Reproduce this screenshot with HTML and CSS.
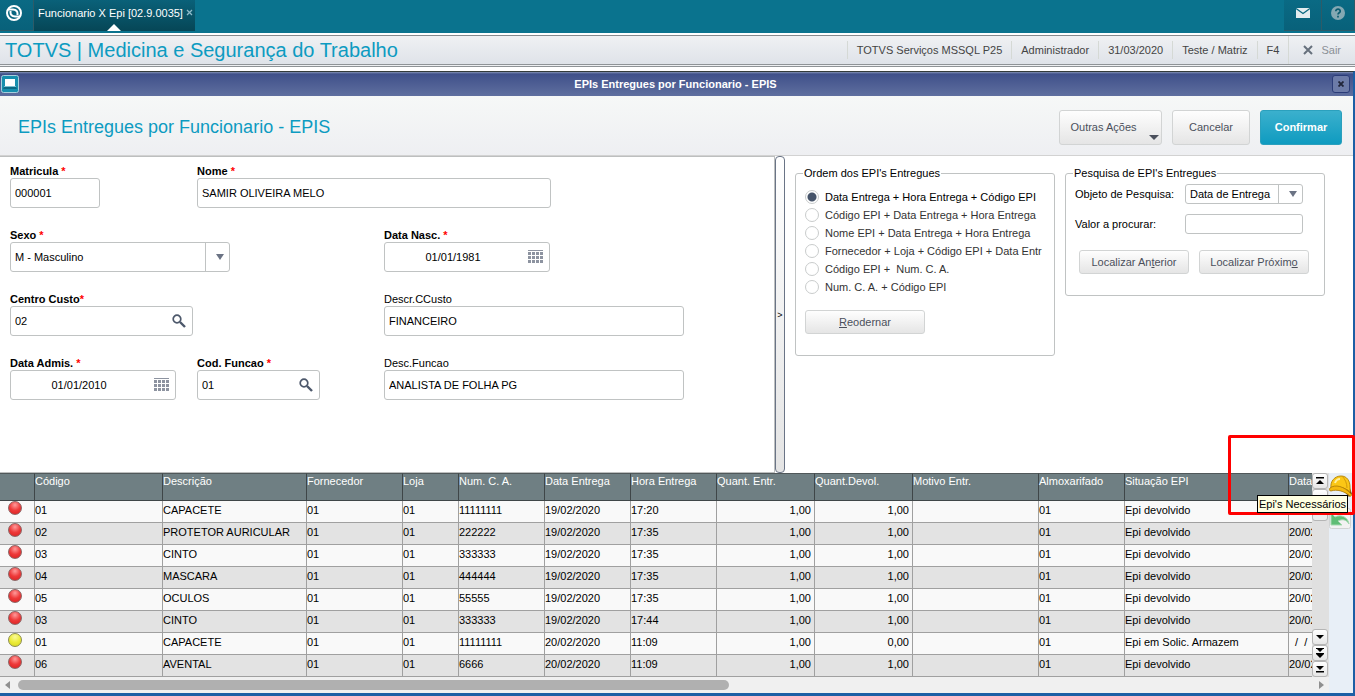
FILE: index.html
```html
<!DOCTYPE html>
<html lang="pt-BR">
<head>
  <meta charset="UTF-8">
  <meta name="viewport" content="width=device-width, initial-scale=1.0">
  <title>TOTVS | Medicina e Segurança do Trabalho</title>
  <link rel="stylesheet" href="styles.css">
</head>
<body>
  <!-- Top bar -->
  <header class="topbar">
    <button class="top-btn logo" aria-label="Menu">
      <svg width="18" height="18" viewBox="0 0 18 18"><circle cx="9" cy="9" r="7" fill="none" stroke="#fff" stroke-width="2"/><path d="M3 5.500L8 5.500Q12.500 6 12.500 9.500V11" fill="none" stroke="#fff" stroke-width="2"/><path d="M15 12.500L10 12.500Q5.500 12 5.500 8.500V7" fill="none" stroke="#fff" stroke-width="2"/></svg>
    </button>
    <div class="tab">
      <span>Funcionario X Epi [02.9.0035]</span>
      <button class="tab-close" aria-label="Fechar aba"><svg width="7" height="7" viewBox="0 0 7 7"><path d="M1 1l5 5M6 1L1 6" stroke="#8fbccb" stroke-width="1.300"/></svg></button>
    </div>
    <div class="top-right">
      <button class="top-btn mail" aria-label="Mensagens">
        <svg width="14" height="10" viewBox="0 0 14 10"><rect width="14" height="10" fill="#e3ecef"/><path d="M0 0.500l7 5 7-5" fill="none" stroke="#0a6880" stroke-width="1.300"/></svg>
      </button>
      <button class="top-btn help" aria-label="Ajuda">
        <svg width="14" height="14" viewBox="0 0 14 14"><circle cx="7" cy="7" r="7" fill="#84a8b3"/><path d="M4.800 5.300C4.800 2.300 9.300 2.500 9.200 5.200C9.200 6.800 7 6.700 7 8.600M7 9.700v1.700" fill="none" stroke="#0a5b70" stroke-width="1.700"/></svg>
      </button>
    </div>
  </header>

  <!-- Status bar -->
  <div class="statusbar">
    <h1>TOTVS | Medicina e Segurança do Trabalho</h1>
    <ul>
      <li>TOTVS Serviços MSSQL P25</li>
      <li>Administrador</li>
      <li>31/03/2020</li>
      <li>Teste / Matriz</li>
      <li>F4</li>
    </ul>
    <button class="exit">
      <svg width="10" height="10" viewBox="0 0 10 10"><path d="M1 1l8 8M9 1L1 9" stroke="#66707c" stroke-width="2"/></svg>
      Sair
    </button>
  </div>

  <!-- Window -->
  <main class="window">
    <div class="titlebar">
      <svg class="win-icon" width="18" height="18" viewBox="0 0 18 18"><rect x="0.500" y="0.500" width="17" height="17" rx="2" fill="#178fae" stroke="#a9cfdd"/><rect x="4" y="4" width="10" height="7" fill="#fff"/><path d="M3 12h12l1 2H2z" fill="#0b6984"/><path d="M3 11.500h12" stroke="#7cc0d2"/></svg>
      <h2>EPIs Entregues por Funcionario - EPIS</h2>
      <button class="win-close" aria-label="Fechar"><svg width="6" height="6" viewBox="0 0 6 6"><path d="M0.500 0.500l5 5M5.500 0.500l-5 5" stroke="#20253a" stroke-width="1.800"/></svg></button>
    </div>

    <div class="heading">
      <h3>EPIs Entregues por Funcionario - EPIS</h3>
      <div class="actions">
        <button class="btn more">Outras Ações</button>
        <button class="btn cancel">Cancelar</button>
        <button class="btn primary">Confirmar</button>
      </div>
    </div>

    <section class="content">
      <form class="employee">
        <div class="field">
          <label for="matricula"><b>Matricula</b> <i>*</i></label>
          <input class="w-code" id="matricula" type="text" value="000001">
        </div>
        <div class="field wide">
          <label for="nome"><b>Nome</b> <i>*</i></label>
          <input class="w-name" id="nome" type="text" value="SAMIR OLIVEIRA MELO">
        </div>

        <div class="field wide">
          <label for="sexo"><b>Sexo</b> <i>*</i></label>
          <div class="select w-select">
            <select id="sexo"><option>M - Masculino</option></select>
          </div>
        </div>
        <div class="field">
          <label for="nasc"><b>Data Nasc.</b> <i>*</i></label>
          <div class="with-icon w-date">
            <input class="date" id="nasc" type="text" value="01/01/1981">
            <svg width="15" height="13" viewBox="0 0 15 13"><path d="M0 0.500h15M0 3.500h15M0 7.500h15M0 11.500h15" stroke="#8d93a0"/><path d="M0 3.500h15M0 7.500h15M0 11.500h15" stroke="#fff"/><path d="M0 3.500h15M0 7.500h15M0 11.500h15" stroke="#8d93a0" stroke-width="3" stroke-dasharray="3 1"/></svg>
          </div>
        </div>

        <div class="field wide">
          <label for="custo"><b>Centro Custo</b><i>*</i></label>
          <div class="with-icon w-lookup">
            <input id="custo" type="text" value="02">
            <svg width="14" height="14" viewBox="0 0 14 14"><circle cx="5" cy="5" r="3.800" fill="none" stroke="#4d586b" stroke-width="1.700"/><path d="M8 8l5 5" stroke="#4d586b" stroke-width="2.400"/></svg>
          </div>
        </div>
        <div class="field">
          <label for="desccusto">Descr.CCusto</label>
          <input class="w-desc" id="desccusto" type="text" value="FINANCEIRO">
        </div>

        <div class="field">
          <label for="admis"><b>Data Admis.</b> <i>*</i></label>
          <div class="with-icon w-date">
            <input class="date" id="admis" type="text" value="01/01/2010">
            <svg width="15" height="13" viewBox="0 0 15 13"><path d="M0 0.500h15" stroke="#8d93a0"/><path d="M0 3.500h15M0 7.500h15M0 11.500h15" stroke="#8d93a0" stroke-width="3" stroke-dasharray="3 1"/></svg>
          </div>
        </div>
        <div class="field">
          <label for="funcao"><b>Cod. Funcao</b> <i>*</i></label>
          <div class="with-icon w-func">
            <input id="funcao" type="text" value="01">
            <svg width="14" height="14" viewBox="0 0 14 14"><circle cx="5" cy="5" r="3.800" fill="none" stroke="#4d586b" stroke-width="1.700"/><path d="M8 8l5 5" stroke="#4d586b" stroke-width="2.400"/></svg>
          </div>
        </div>
        <div class="field">
          <label for="descfuncao">Desc.Funcao</label>
          <input class="w-desc" id="descfuncao" type="text" value="ANALISTA DE FOLHA PG">
        </div>
      </form>

      <button class="splitter" aria-label="Recolher painel">&gt;</button>

      <div class="side">
        <fieldset>
          <legend>Ordem dos EPI's Entregues</legend>
          <div class="radios">
            <label><input type="radio" name="ordem" checked><span>Data Entrega + Hora Entrega + Código EPI</span></label>
            <label><input type="radio" name="ordem"><span>Código EPI + Data Entrega + Hora Entrega</span></label>
            <label><input type="radio" name="ordem"><span>Nome EPI + Data Entrega + Hora Entrega</span></label>
            <label><input type="radio" name="ordem"><span>Fornecedor + Loja + Código EPI + Data Entr</span></label>
            <label><input type="radio" name="ordem"><span>Código EPI +&nbsp; Num. C. A.</span></label>
            <label><input type="radio" name="ordem"><span>Num. C. A. + Código EPI</span></label>
          </div>
          <button class="btn small reorder"><u>R</u>eodernar</button>
        </fieldset>

        <fieldset class="search">
          <legend>Pesquisa de EPI's Entregues</legend>
          <div class="line">
            <label for="objeto">Objeto de Pesquisa:</label>
            <div class="select short">
              <select id="objeto"><option>Data de Entrega</option></select>
            </div>
          </div>
          <div class="line">
            <label for="valor">Valor a procurar:</label>
            <input class="short" id="valor" type="text">
          </div>
          <div class="find">
            <button class="btn small">Localizar An<u>t</u>erior</button>
            <button class="btn small">Localizar Próxim<u>o</u></button>
          </div>
        </fieldset>
      </div>
    </section>

    <!-- Grid -->
    <section class="grid">
      <div class="grid-main">
        <div class="grid-rows">
          <div class="table-wrap">
            <table>
              <colgroup>
                <col class="c-flag"><col class="c-cod"><col class="c-desc"><col class="c-forn"><col class="c-loja">
                <col class="c-mid"><col class="c-mid"><col class="c-mid"><col class="c-qty"><col class="c-qty">
                <col class="c-mot"><col class="c-mid"><col class="c-sit"><col class="c-last">
              </colgroup>
              <thead>
                <tr><th></th><th>Código</th><th>Descrição</th><th>Fornecedor</th><th>Loja</th><th>Num. C. A.</th><th>Data Entrega</th><th>Hora Entrega</th><th>Quant. Entr.</th><th>Quant.Devol.</th><th>Motivo Entr.</th><th>Almoxarifado</th><th>Situação EPI</th><th>Data</th></tr>
              </thead>
              <tbody>
                <tr><td><span class="ball"></span></td><td>01</td><td>CAPACETE</td><td>01</td><td>01</td><td>11111111</td><td>19/02/2020</td><td>17:20</td><td class="num">1,00</td><td class="num">1,00</td><td></td><td>01</td><td>Epi devolvido</td><td></td></tr>
                <tr><td><span class="ball"></span></td><td>02</td><td>PROTETOR AURICULAR</td><td>01</td><td>01</td><td>222222</td><td>19/02/2020</td><td>17:35</td><td class="num">1,00</td><td class="num">1,00</td><td></td><td>01</td><td>Epi devolvido</td><td>20/02/2020</td></tr>
                <tr><td><span class="ball"></span></td><td>03</td><td>CINTO</td><td>01</td><td>01</td><td>333333</td><td>19/02/2020</td><td>17:35</td><td class="num">1,00</td><td class="num">1,00</td><td></td><td>01</td><td>Epi devolvido</td><td>20/02/2020</td></tr>
                <tr><td><span class="ball"></span></td><td>04</td><td>MASCARA</td><td>01</td><td>01</td><td>444444</td><td>19/02/2020</td><td>17:35</td><td class="num">1,00</td><td class="num">1,00</td><td></td><td>01</td><td>Epi devolvido</td><td>20/02/2020</td></tr>
                <tr><td><span class="ball"></span></td><td>05</td><td>OCULOS</td><td>01</td><td>01</td><td>55555</td><td>19/02/2020</td><td>17:35</td><td class="num">1,00</td><td class="num">1,00</td><td></td><td>01</td><td>Epi devolvido</td><td>20/02/2020</td></tr>
                <tr><td><span class="ball"></span></td><td>03</td><td>CINTO</td><td>01</td><td>01</td><td>333333</td><td>19/02/2020</td><td>17:44</td><td class="num">1,00</td><td class="num">1,00</td><td></td><td>01</td><td>Epi devolvido</td><td>20/02/2020</td></tr>
                <tr><td><span class="ball yellow"></span></td><td>01</td><td>CAPACETE</td><td>01</td><td>01</td><td>11111111</td><td>20/02/2020</td><td>11:09</td><td class="num">1,00</td><td class="num">0,00</td><td></td><td>01</td><td>Epi em Solic. Armazem</td><td>&nbsp; /&nbsp; /</td></tr>
                <tr><td><span class="ball"></span></td><td>06</td><td>AVENTAL</td><td>01</td><td>01</td><td>6666</td><td>20/02/2020</td><td>11:09</td><td class="num">1,00</td><td class="num">1,00</td><td></td><td>01</td><td>Epi devolvido</td><td>20/02/2020</td></tr>
              </tbody>
            </table>
          </div>
          <div class="vscroll">
            <button aria-label="Primeiro"><svg width="8" height="8" viewBox="0 0 8 8"><path d="M0 0h8v1.500H0zM4 3l4 4H0z"/></svg></button>
            <button aria-label="Linha acima"><svg width="8" height="8" viewBox="0 0 8 8"><path d="M4 2l4 4H0z"/></svg></button>
            <div class="thumb"></div>
            <button aria-label="Linha abaixo"><svg width="8" height="8" viewBox="0 0 8 8"><path d="M4 6L0 2h8z"/></svg></button>
            <button aria-label="Página abaixo"><svg width="8" height="10" viewBox="0 0 8 10"><path d="M4 4L1 1H0V0h8v1H7zM4 10L0 6V5h8v1z"/></svg></button>
            <button aria-label="Último"><svg width="8" height="8" viewBox="0 0 8 8"><path d="M4 5L0 1h8zM0 6h8v1.500H0z"/></svg></button>
          </div>
        </div>
        <div class="hscroll">
          <span class="arrow left"></span>
          <div class="track"><div class="bar"></div></div>
          <span class="arrow right"></span>
        </div>
      </div>

      <div class="tools">
        <button aria-label="Epi's Necessários">
          <svg width="24" height="23" viewBox="0 0 24 23"><path d="M14 15l6 7 3-3-2-6z" fill="#77500a"/><path d="M2 13C1 6 6 1 12 1c6 0 9 5 9 11v5c-5-5-13-6-19-4z" fill="#fbc716" stroke="#b98a0a"/><path d="M1 13c5-4 14-2 21 6 1 1 0 3-1 2-6-5-13-7-19-5-2 0-2-2-1-3z" fill="#f4b90f" stroke="#a87808" stroke-width="0.800"/><path d="M6 8c1-3 3-4 5-4" fill="none" stroke="#fff0a0" stroke-width="2"/><path d="M13 1c3 3 5 7 5 12" fill="none" stroke="#d49a0a"/></svg>
        </button>
        <button aria-label="Voltar">
          <svg width="22" height="21" viewBox="0 0 22 21"><rect x="0.500" y="0.500" width="21" height="20" rx="2" fill="#f2f2f2" stroke="#d0d3d3"/><path d="M2 5v12h11l-4-4c4-2 8-2 11 3-1-7-8-10-14-7z" fill="#5fbd75" stroke="#a5d9b0"/></svg>
        </button>
        <span class="tooltip">Epi's Necessários</span>
      </div>
      <div class="highlight"></div>
    </section>
  </main>
</body>
</html>
```
FILE: styles.css
```css
/* Global Styles */
* {
  margin: 0;
  padding: 0;
  box-sizing: border-box;
}

body {
  display: flex;
  flex-direction: column;
  min-height: 100vh;
  background-color: #fff;
  color: #000;
  font-family: "Liberation Sans", Arial, sans-serif;
  font-size: 11px;
  line-height: 14px;
}

button,
input,
select {
  font: inherit;
  color: inherit;
}

button {
  border: none;
  background: none;
  cursor: pointer;
}

svg {
  display: block;
}

/* Top bar */
.topbar {
  display: flex;
  height: 33px;
  background-color: #0a738e;
}

.top-btn {
  display: flex;
  justify-content: center;
  height: 31px;
  background: linear-gradient(#0a6a84, #08617a);
  border-right: 1px solid #2d5b68;
  border-bottom: 1px solid #2d5b68;
}

.logo {
  width: 34px;
  padding: 4px 6px 0 0;
}

.tab {
  position: relative;
  display: flex;
  align-items: flex-start;
  gap: 3px;
  height: 31px;
  padding: 6px 2px 0 4px;
  background: linear-gradient(#0a6179, #064656);
  color: #fff;
}

.tab::after {
  content: "";
  position: absolute;
  bottom: 0;
  left: 50%;
  margin-left: -7px;
  border: 7px solid transparent;
  border-top: none;
  border-bottom-color: #fff;
}

.tab-close {
  padding-top: 3px;
}

.top-right {
  display: flex;
  margin-left: auto;
}

.mail {
  width: 38px;
  padding-top: 8px;
}

.help {
  width: 33px;
  padding-top: 6px;
}

/* Status bar */
.statusbar {
  display: flex;
  align-items: center;
  height: 32px;
  margin: 2px 0 4px;
  padding-left: 5px;
  background: linear-gradient(#eff1f3, #dfe3e9);
  border-top: 1px solid #85898d;
  border-bottom: 3px double #8f9397;
}

.statusbar h1 {
  flex: 1;
  color: #0d9bc1;
  font-size: 20px;
  line-height: 24px;
  font-weight: normal;
}

.statusbar ul {
  display: flex;
  list-style: none;
  color: #444;
}

.statusbar li {
  padding: 2px 9px;
  border-left: 1px solid #d5d9d5;
}

.exit {
  display: flex;
  align-items: center;
  gap: 8px;
  align-self: stretch;
  padding: 0 14px;
  border-left: 1px solid #d5d9d5;
  color: #8b9096;
}

/* Window */
.window {
  display: flex;
  flex: 1;
  flex-direction: column;
  border-top: 1px solid #333b3b;
  border-right: 2px solid #1c5fa5;
  border-bottom: 3px solid #1c5fa5;
}

.titlebar {
  display: flex;
  align-items: center;
  height: 24px;
  padding: 0 3px 0 1px;
  background: linear-gradient(#8492b5 0, #3f508a 2px, #5f6f9f);
}

.titlebar h2 {
  flex: 1;
  color: #fff;
  font-size: 11px;
  line-height: 14px;
  text-align: center;
}

.win-close {
  display: flex;
  align-items: center;
  justify-content: center;
  width: 18px;
  height: 18px;
  border: 1px solid #2b3c78;
  border-radius: 3px;
  background-color: #6c7ba8;
}

.heading {
  display: flex;
  align-items: center;
  justify-content: space-between;
  height: 60px;
  padding: 3px 11px 0 18px;
  background: linear-gradient(#f6f8f7, #eeeff2);
  border-bottom: 1px solid #d2d2d2;
}

.heading h3 {
  color: #0d9bc1;
  font-size: 18px;
  line-height: 22px;
  font-weight: normal;
}

.actions {
  display: flex;
  gap: 10px;
}

.btn {
  height: 35px;
  border: 1px solid #d2d4d4;
  border-radius: 3px;
  background: linear-gradient(#fefefe, #e5e5e5);
  color: #4b505c;
}

.more {
  position: relative;
  width: 103px;
  padding-right: 14px;
}

.more::after {
  content: "";
  position: absolute;
  right: 2px;
  bottom: 4px;
  border: 5px solid transparent;
  border-top-color: #4b505c;
  border-bottom: none;
}

.cancel {
  width: 78px;
}

.primary {
  width: 82px;
  border-color: #2ba0bd;
  background: linear-gradient(#3bb0cd, #0f9bc0);
  color: #fff;
  font-weight: bold;
}

.small {
  width: 110px;
  height: 24px;
}

/* Form */
.content {
  display: flex;
  flex: 1;
}

.employee {
  display: grid;
  flex: 1;
  grid-template-columns: 187px 187px 1fr;
  align-content: start;
  row-gap: 20px;
  padding: 7px 0 20px 10px;
  border-top: 1px solid #bdbfbf;
  border-right: 1px solid #bdbfbf;
  border-bottom: 1px solid #bdbfbf;
}

.wide {
  grid-column: span 2;
}

.field > label {
  display: block;
}

.field i {
  color: #f00;
  font-style: normal;
  font-weight: bold;
}

input[type="text"],
select {
  display: block;
  width: 100%;
  height: 30px;
  padding: 0 4px;
  border: 1px solid #c0c3c3;
  border-radius: 3px;
  background-color: #fff;
}

input.w-code {
  width: 90px;
}

input.w-name {
  width: 354px;
}

input.w-desc {
  width: 300px;
}

.w-select {
  width: 220px;
}

.w-lookup {
  width: 183px;
}

.w-date {
  width: 166px;
}

.w-func {
  width: 123px;
}

input.date {
  padding-right: 32px;
  text-align: center;
}

.with-icon,
.select {
  position: relative;
}

.with-icon svg {
  position: absolute;
  top: 8px;
  right: 7px;
}

select {
  appearance: none;
}

.select::before {
  content: "";
  position: absolute;
  top: 1px;
  right: 1px;
  bottom: 1px;
  width: 23px;
  border-left: 1px solid #c0c3c3;
}

.select::after {
  content: "";
  position: absolute;
  top: 50%;
  right: 6px;
  margin-top: -3px;
  border: 4px solid transparent;
  border-top: 6px solid #6b7384;
  border-bottom: none;
}

.splitter {
  width: 10px;
  border: 1px solid #6a7486;
  border-radius: 4px;
  background: linear-gradient(#fff, #e4e4e4);
  font-size: 9px;
}

/* Side panel */
.side {
  display: flex;
  align-items: flex-start;
  gap: 10px;
  width: 568px;
  padding: 10px;
}

fieldset {
  width: 260px;
  padding: 8px 9px 21px;
  border: 1px solid #c0c3c3;
  border-radius: 3px;
}

legend {
  margin-left: -2px;
  padding: 0 1px;
}

.radios label {
  display: flex;
  align-items: center;
  gap: 6px;
  height: 18px;
  color: #333;
  white-space: nowrap;
}

.radios label:first-child {
  color: #000;
}

.radios input {
  appearance: none;
  width: 14px;
  height: 14px;
  border: 1px solid #c9cccc;
  border-radius: 50%;
  background-color: #fff;
}

.radios input:checked {
  background: radial-gradient(circle, #46546a 4px, #fff 5px);
}

.reorder {
  width: 120px;
  margin-top: 14px;
}

.line {
  display: flex;
  justify-content: space-between;
  align-items: center;
  margin: 0 12px 10px 0;
}

.search {
  padding-top: 4px;
}

.search .short {
  width: 118px;
}

.search input,
.search select {
  height: 20px;
}

.find {
  display: flex;
  gap: 10px;
  margin: 16px 0 0 4px;
}

/* Grid */
.grid {
  position: relative;
  display: flex;
}

.grid-main {
  flex: 1;
  min-width: 0;
}

.grid-rows {
  display: flex;
}

.table-wrap {
  flex: 1;
  min-width: 0;
  overflow: hidden;
}

table {
  width: 1365px;
  table-layout: fixed;
  border-collapse: separate;
  border-spacing: 0;
}

.c-flag {
  width: 35px;
}

.c-cod {
  width: 128px;
}

.c-desc {
  width: 144px;
}

.c-forn {
  width: 96px;
}

.c-loja {
  width: 56px;
}

.c-mid {
  width: 86px;
}

.c-qty {
  width: 98px;
}

.c-mot {
  width: 126px;
}

.c-sit {
  width: 164px;
}

th {
  height: 28px;
  border-top: 1px solid #50585a;
  border-right: 1px solid #3f4648;
  border-bottom: 1px solid #3f4648;
  background-color: #6f7f83;
  color: #fff;
  font-weight: normal;
  text-align: left;
  vertical-align: top;
  white-space: nowrap;
}

td {
  height: 22px;
  padding-top: 2px;
  border-right: 1px solid #a0a0a0;
  border-bottom: 1px solid #a0a0a0;
  background-color: #f9f9f9;
  vertical-align: top;
  white-space: nowrap;
}

tr:nth-child(even) td {
  background-color: #e3e3e3;
}

.num {
  padding-right: 3px;
  text-align: right;
}

.ball {
  display: block;
  width: 14px;
  height: 14px;
  margin: -2px 0 0 8px;
  border: 1px solid #8d6464;
  border-radius: 50%;
  background: radial-gradient(circle at 50% 25%, #ff9a9a, #ee3a3a 50%, #d81f1f);
}

.yellow {
  border-color: #8c8c50;
  background: radial-gradient(circle at 50% 25%, #fafa9a, #ecec3a 50%, #d4d41f);
}

/* Scrollbars */
.vscroll {
  display: flex;
  flex-direction: column;
  width: 17px;
  background-color: #e0e0e0;
}

.vscroll button {
  display: flex;
  align-items: center;
  justify-content: center;
  width: 16px;
  height: 16px;
  border: 1px solid #b5b5b5;
  border-radius: 3px;
  background: linear-gradient(#fff, #e6e6e6);
}

.thumb {
  width: 16px;
  height: 16px;
  margin-bottom: auto;
  border: 1px solid #b5b5b5;
  border-radius: 3px;
  background-color: #ececec;
}

.hscroll {
  display: flex;
  align-items: center;
  height: 16px;
  padding: 0 5px;
  background-color: #f0f0f0;
}

.track {
  flex: 1;
  padding: 0 8px;
}

.bar {
  width: 55%;
  height: 10px;
  border-radius: 5px;
  background-color: #b0b0b0;
}

.arrow {
  border: 4px solid transparent;
}

.left {
  border-right: 5px solid #8f8f8f;
  border-left: none;
}

.right {
  border-right: none;
  border-left: 5px solid #8f8f8f;
}

.tools {
  position: relative;
  display: flex;
  flex-direction: column;
  gap: 10px;
  width: 24px;
  padding-top: 2px;
  background-color: #e8eff7;
}

/* Overlays */
.tooltip {
  position: absolute;
  z-index: 2;
  top: 22px;
  right: 5px;
  padding: 1px;
  border: 1px solid #000;
  background-color: #ffffe1;
  white-space: nowrap;
}

.highlight {
  position: absolute;
  z-index: 1;
  top: -38px;
  right: -2px;
  width: 127px;
  height: 80px;
  border: 3px solid #f00;
  border-radius: 2px;
  pointer-events: none;
}
```
